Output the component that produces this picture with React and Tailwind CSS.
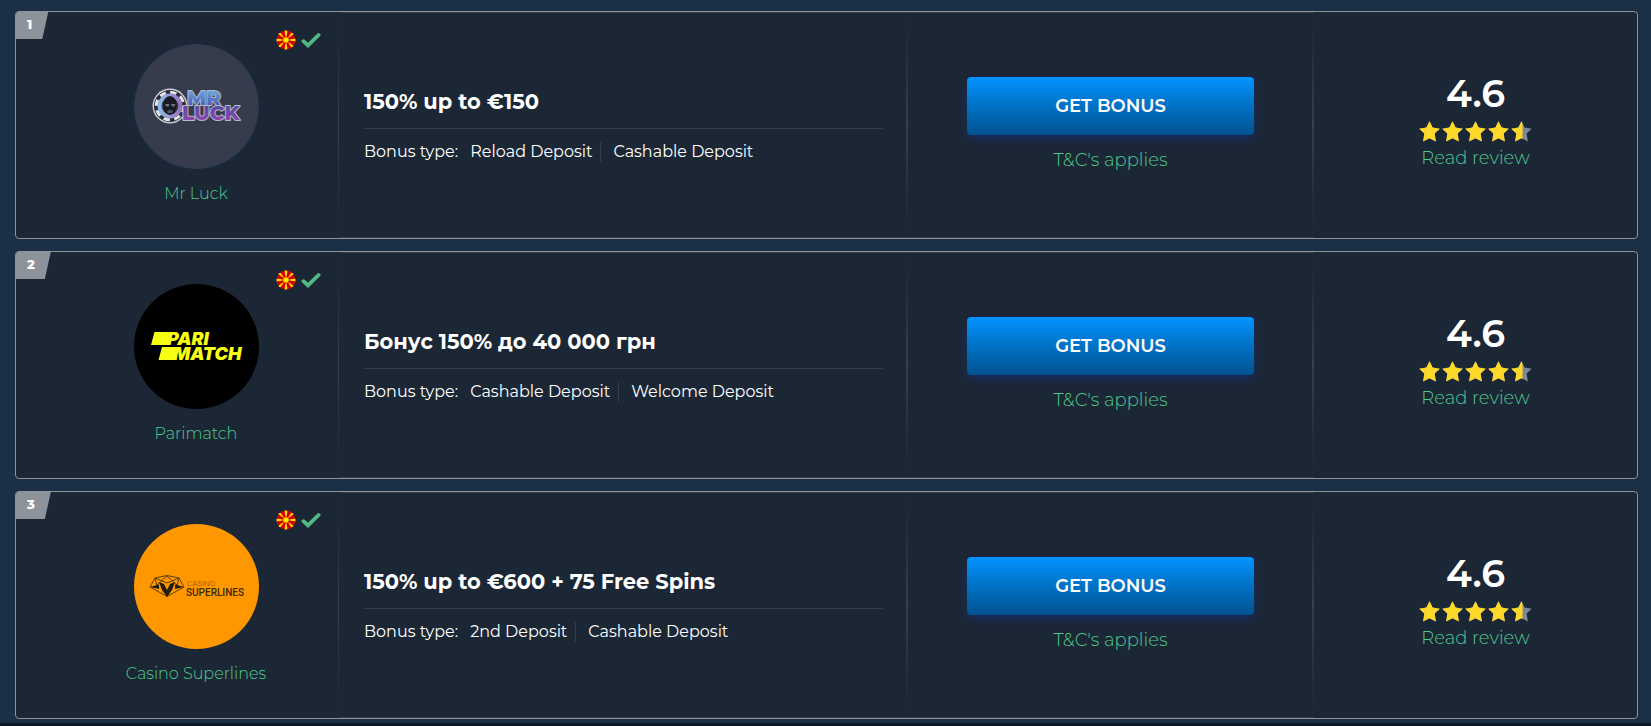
import React from "react";

const casinos = [
  {
    rank: 1,
    name: "Mr Luck",
    logo: MrLuckLogo,
    bonus: "150% up to €150",
    types: ["Reload Deposit", "Cashable Deposit"],
    rating: 4.6,
  },
  {
    rank: 2,
    name: "Parimatch",
    logo: ParimatchLogo,
    bonus: "Бонус 150% до 40 000 грн",
    types: ["Cashable Deposit", "Welcome Deposit"],
    rating: 4.6,
  },
  {
    rank: 3,
    name: "Casino Superlines",
    logo: SuperlinesLogo,
    bonus: "150% up to €600 + 75 Free Spins",
    types: ["2nd Deposit", "Cashable Deposit"],
    rating: 4.6,
  },
];

function MrLuckLogo() {
  return (
    <svg viewBox="0 0 125 125" className="size-full" aria-hidden="true">
      <defs>
        <pattern id="luck-dots" width="5" height="5" patternUnits="userSpaceOnUse">
          <circle cx="1" cy="1" r="0.5" fill="#2f3545" />
          <circle cx="3.5" cy="3.5" r="0.5" fill="#303545" />
        </pattern>
        <pattern id="luck-red" width="10" height="13" patternUnits="userSpaceOnUse">
          <circle cx="2" cy="3" r="0.5" fill="#61304a" />
          <circle cx="7" cy="9" r="0.5" fill="#572f46" />
        </pattern>
        <linearGradient id="luck-top" gradientUnits="userSpaceOnUse" x1="0" y1="47" x2="0" y2="62">
          <stop offset="0" stopColor="#69a5dc" />
          <stop offset="1" stopColor="#4a58b5" />
        </linearGradient>
        <linearGradient id="luck-bottom" gradientUnits="userSpaceOnUse" x1="0" y1="62" x2="0" y2="76">
          <stop offset="0" stopColor="#5a4aa5" />
          <stop offset="1" stopColor="#8a45ac" />
        </linearGradient>
        <linearGradient id="luck-ring">
          <stop offset="0" stopColor="#8dbbe6" />
          <stop offset="1" stopColor="#9a72bd" />
        </linearGradient>
      </defs>
      <circle cx="62.5" cy="62.5" r="62" fill="#363c4c" stroke="#2a3d58" />
      <circle cx="62.5" cy="62.5" r="60" fill="url(#luck-dots)" />
      <path d="M26 15h74v27H26zM26 82h74v27H26z" fill="url(#luck-red)" />
      <circle cx="36" cy="62" r="17.5" fill="#c9ccd4" />
      <circle cx="36" cy="62" r="16" fill="#292b34" />
      <circle cx="36" cy="62" r="13.8" fill="none" stroke="#e4e6eb" strokeWidth="3" strokeDasharray="6.4 4.4" />
      <circle cx="36" cy="62" r="10.4" fill="#3a3f55" stroke="url(#luck-ring)" strokeWidth="4" />
      <ellipse cx="36" cy="61.5" rx="7" ry="9.5" fill="#191b24" />
      <path d="M31 60h4.500l-1 2.500h-2.500zM37 60h4.500l-1 2.500h-2.500z" fill="#6b7380" />
      <path d="M33 67q3-2 6 0l-1 2h-4z" fill="#50555f" />
      <text
        fontFamily="Montserrat, Inter, sans-serif"
        fontWeight="800"
        fontSize="20"
        stroke="#b4b9cb"
        strokeWidth="2"
        strokeLinejoin="round"
        paintOrder="stroke"
      >
        <tspan x="53" y="61" fill="url(#luck-top)">MR</tspan>
        <tspan x="48" y="76" fill="url(#luck-bottom)">LUCK</tspan>
      </text>
    </svg>
  );
}

function ParimatchLogo() {
  return (
    <svg viewBox="0 0 125 125" className="size-full" aria-hidden="true">
      <circle cx="62.5" cy="62.5" r="62.5" fill="#000" />
      <path d="M20.500 48h17l-3 13h-17.500zM28 63h16.500l-3 13h-17z" fill="#f8ff13" />
      <text fontFamily="Inter, sans-serif" fontWeight="900" fontStyle="italic" fontSize="18" fill="#f8ff13">
        <tspan x="33" y="61">PARI</tspan>
        <tspan x="39" y="76">MATCH</tspan>
      </text>
    </svg>
  );
}

function SuperlinesLogo() {
  return (
    <svg viewBox="0 0 125 125" className="size-full" aria-hidden="true">
      <circle cx="62.5" cy="62.5" r="62.5" fill="#ff9800" />
      <g fill="none" stroke="#4a360c" strokeWidth="0.9" strokeLinejoin="round">
        <path d="M16 63l5-9 12-2.500 12 2.500 5 9-17 9.500z" />
        <path d="M21 54l12 5 12-5M33 52l-10 9M33 52l10 9M21 54l2 8M45 54l-2 8" />
      </g>
      <path d="M16 63l9-2.500 0 4.500zM50 63l-9-2.500 0 4.500z" fill="#241d10" />
      <path d="M25 58l5 2 3 6 3-6 5-2-3 8-5 7-5-7z" fill="#241d10" />
      <text fontFamily="Roboto, sans-serif">
        <tspan x="53" y="62" fontSize="8" fill="#855510">CASINO</tspan>
        <tspan x="52" y="71.500" fontSize="10" fontWeight="500" fill="#3a2a0c">SUPERLINES</tspan>
      </text>
    </svg>
  );
}

function MacedoniaFlag() {
  return (
    <svg viewBox="0 0 20 20" className="size-5" role="img" aria-label="North Macedonia">
      <clipPath id="flag-round">
        <circle cx="10" cy="10" r="9.5" />
      </clipPath>
      <g clipPath="url(#flag-round)">
        <path d="M0 0h20v20H0z" fill="#d20000" />
        <path
          d="M8.500 0h3l-1.500 10zM8.500 20h3l-1.500-10zM0 8.500v3l10-1.500zM20 8.500v3l-10-1.500zM2 3.800l1.800-1.800L10 10zM18 3.800l-1.800-1.800L10 10zM2 16.200l1.800 1.800L10 10zM18 16.200l-1.800 1.800L10 10z"
          fill="#ffe600"
        />
        <circle cx="10" cy="10" r="3.6" fill="#d20000" />
        <circle cx="10" cy="10" r="2.8" fill="#ffe600" />
      </g>
    </svg>
  );
}

function CheckMark() {
  return (
    <svg viewBox="0 0 20 20" className="size-5" role="img" aria-label="Accepted">
      <path d="M2.400 11.200l4.600 4.200L17.600 5" fill="none" stroke="#4fb985" strokeWidth="3.800" strokeLinecap="round" />
    </svg>
  );
}

const STAR = "M10 0.300l3 6 6.800 1-4.900 4.700 1.200 7.600-6.100-3.200-6.100 3.200 1.200-7.600L.2 7.300l6.800-1z";

function Stars({ rating }) {
  return (
    <div className="flex gap-0.5" role="img" aria-label={`${rating} out of 5`}>
      {[0, 1, 2, 3, 4].map((i) => (
        <svg key={i} viewBox="0 0 20 20" className="size-[21px]">
          <clipPath id="half-star">
            <path d="M0 0h11v20H0z" />
          </clipPath>
          <path d={STAR} fill="#7f8794" />
          <path d={STAR} fill="#ffd929" clipPath={rating - i < 1 ? "url(#half-star)" : undefined} />
        </svg>
      ))}
    </div>
  );
}

// Vertical rule that fades out at both ends
function Rule({ className }) {
  return <span className={`${className} shrink-0 my-2 bg-linear-to-b from-transparent via-[#35404f] to-transparent`} />;
}

function CasinoCard({ casino }) {
  const Logo = casino.logo;
  return (
    <article className="relative grid grid-cols-[323fr_569fr_406fr_323fr] h-[228px] overflow-hidden rounded border border-[#8c939b] bg-[#1c2736]">
      <span className="absolute left-0 top-0 h-[27px] pl-[11px] pr-4 pt-1 text-[13px] leading-4 font-extrabold text-white bg-[#8c939b] [clip-path:polygon(0_0,100%_0,calc(100%_-_6px)_100%,0_100%)]">
        {casino.rank}
      </span>

      <div className="flex">
        <div className="relative flex-1 flex flex-col items-center pl-[38px] pt-8">
          <div className="absolute right-[17px] top-[18px] flex gap-[5px]">
            <MacedoniaFlag />
            <CheckMark />
          </div>
          <a href="#" className="flex flex-col items-center text-base leading-6 font-light text-[#4fcb8f]">
            <span className="block size-[125px]">
              <Logo />
            </span>
            <span className="mt-[13px]">{casino.name}</span>
          </a>
        </div>
        <Rule className="w-px" />
      </div>

      <div className="flex border-y border-[#353c48]">
        <div className="flex-1 pl-[25px] pr-[23px] pt-[73px]">
          <h2 className="pb-[10px] border-b border-[#323c4a] text-[21px] leading-8 font-bold text-white">{casino.bonus}</h2>
          <div className="flex items-center pt-[13px] text-base leading-5 text-white">
            <span className="pr-3">Bonus type:</span>
            <span className="pr-2">{casino.types[0]}</span>
            <span className="pl-3 border-l border-[#323c4a]">{casino.types[1]}</span>
          </div>
        </div>
        <Rule className="w-0.5" />
      </div>

      <div className="flex border-y border-[#353c48]">
        <div className="flex-1 pl-[59px] pr-[58px] pt-16 text-center">
          <button
            type="button"
            className="w-full h-[58px] rounded bg-linear-to-b from-[#0293ff] to-[#00528f] shadow-[0_4px_10px_rgba(20,48,140,0.5)] text-lg font-semibold text-white"
          >
            GET BONUS
          </button>
          <a href="#" className="inline-block mt-[13px] text-lg leading-6 font-light text-[#4fcb8f]">
            T&amp;C's applies
          </a>
        </div>
        <Rule className="w-0.5" />
      </div>

      <div className="flex flex-col items-center pt-[62px]">
        <strong className="text-[38px] leading-10 font-semibold text-white">{casino.rating}</strong>
        <div className="mt-[7px]">
          <Stars rating={casino.rating} />
        </div>
        <a href="#" className="mt-1 text-lg leading-6 font-light text-[#4fcb8f]">
          Read review
        </a>
      </div>
    </article>
  );
}

export default function App() {
  return (
    <main className="font-['Montserrat','Inter',sans-serif] border-b-[3px] border-[#0f1627] bg-[#1c3045] pl-[15px] pr-[13px] pt-[11px] pb-1">
      <div className="flex flex-col gap-3">
        {casinos.map((casino) => (
          <CasinoCard key={casino.rank} casino={casino} />
        ))}
      </div>
    </main>
  );
}
